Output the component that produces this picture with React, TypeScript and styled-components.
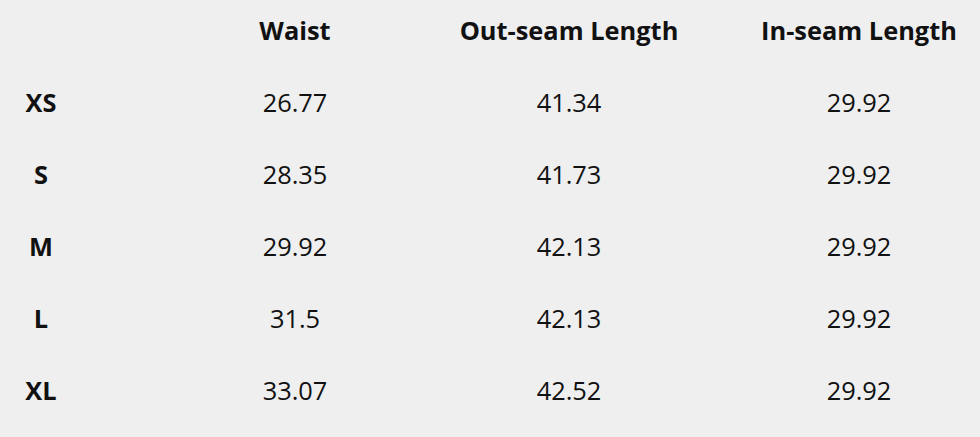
import React from 'react'
import styled, { createGlobalStyle } from 'styled-components'

const GlobalStyle = createGlobalStyle`
  html, body {
    margin: 0;
    padding: 0;
    background: #efefef;
  }
`

interface Column {
  readonly width: number
  readonly offset: number
}

// each column is centred on the same x as in the chart
const columns: Column[] = [
  { width: 82, offset: 0 },
  { width: 240, offset: 93 },
  { width: 240, offset: 34 },
  { width: 240, offset: 50 },
]

const headers = ['', 'Waist', 'Out-seam Length', 'In-seam Length']

const rows = [
  ['XS', '26.77', '41.34', '29.92'],
  ['S', '28.35', '41.73', '29.92'],
  ['M', '29.92', '42.13', '29.92'],
  ['L', '31.5', '42.13', '29.92'],
  ['XL', '33.07', '42.52', '29.92'],
]

const Chart = styled.div`
  width: 980px;
  height: 437px;
  background: #efefef;
  color: #111;
  font-family: 'Open Sans', 'Noto Sans', sans-serif;
  font-size: 25.4px;
  display: flex;
  flex-direction: column;
`

const Row = styled.div<{ $header?: boolean }>`
  display: flex;
  align-items: center;
  height: ${(p) => (p.$header ? 66 : 72)}px;
  padding-bottom: ${(p) => (p.$header ? 6 : 0)}px;
  box-sizing: border-box;
`

const Cell = styled.div<{ $width: number; $offset: number; $bold?: boolean }>`
  flex: none;
  width: ${(p) => p.$width}px;
  margin-left: ${(p) => p.$offset}px;
  text-align: center;
  white-space: nowrap;
  font-weight: ${(p) => (p.$bold ? 700 : 400)};
`

const App = () => (
  <>
    <GlobalStyle />
    <Chart>
      <Row $header>
        {headers.map((h, i) => (
          <Cell key={i} $width={columns[i].width} $offset={columns[i].offset} $bold>
            {h}
          </Cell>
        ))}
      </Row>
      {rows.map((r) => (
        <Row key={r[0]}>
          {r.map((v, i) => (
            <Cell key={i} $width={columns[i].width} $offset={columns[i].offset} $bold={i === 0}>
              {v}
            </Cell>
          ))}
        </Row>
      ))}
    </Chart>
  </>
)

export default App
